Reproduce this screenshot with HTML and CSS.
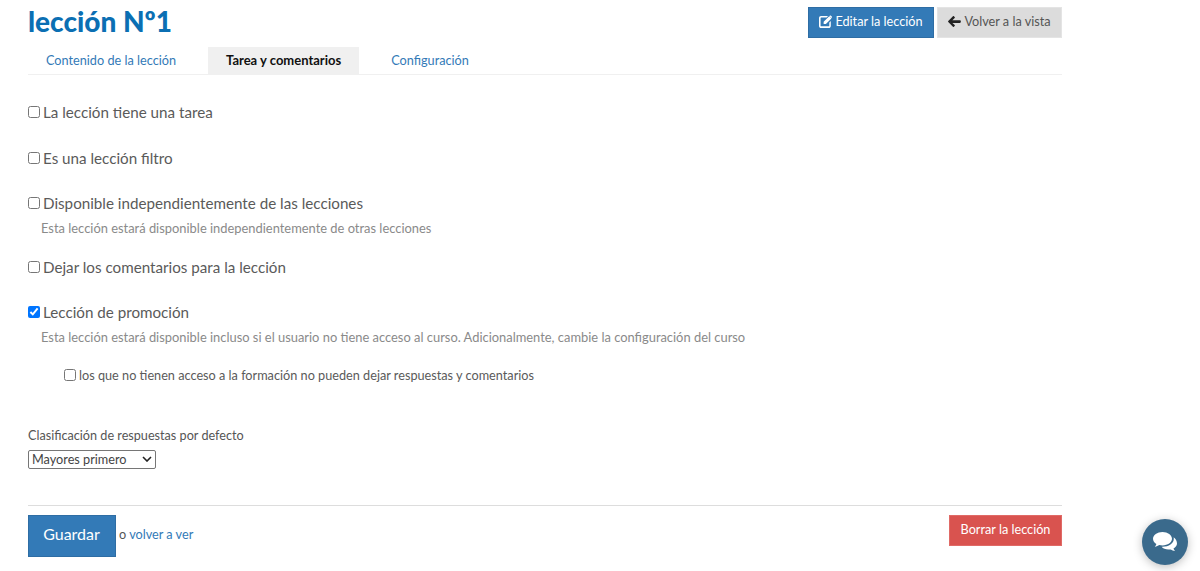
FILE: index.html
```html
<!DOCTYPE html>
<html lang="es">
<head>
<meta charset="utf-8">
<title>lección Nº1</title>
<link rel="stylesheet" href="styles.css">
</head>
<body>
<main class="page">
  <header class="head">
    <h1 class="title">lección Nº1</h1>
    <div class="head-actions">
      <a class="btn btn-blue" href="#"><svg class="ico" viewBox="0 0 14 14" width="13" height="13"><path fill="#fff" d="M2.2 1.2h7.6l-1.6 1.6H2.4c-.4 0-.7.3-.7.7v8c0 .4.3.7.7.7h8c.4 0 .7-.3.7-.7V8l1.6-1.6v5.4c0 1.2-1 2.2-2.2 2.2H2.200c-1.200 0-2.200-1-2.200-2.200V3.400c0-1.200 1-2.200 2.200-2.200z"/><path fill="#fff" d="M5 7.400 11 1.400l2.400 2.400-6 6H5zM11.700.7c.3-.3.800-.3 1.100 0l1 1c.3.3.3.800 0 1.100l-.5.500-2.100-2.100z"/></svg>Editar la lección</a>
      <a class="btn btn-grey" href="#"><svg class="ico" viewBox="0 0 14 12" width="13" height="11"><path fill="#222" d="M6.300.3 7.200 1.200c.3.300.3.700 0 1L4.700 4.500h8.300c.5 0 .9.400.9.900v1.200c0 .5-.4.900-.9.900H4.700l2.500 2.300c.3.300.3.700 0 1l-.9.900c-.3.300-.7.300-1 0L.2 6.500c-.3-.3-.3-.7 0-1L5.300.3c.3-.3.7-.3 1 0z"/></svg>Volver a la vista</a>
    </div>
  </header>
  <nav class="tabs">
    <a class="tab" href="#">Contenido de la lección</a>
    <a class="tab tab-active" href="#">Tarea y comentarios</a>
    <a class="tab" href="#">Configuración</a>
  </nav>
  <form class="form">
    <div class="field"><label class="check"><input type="checkbox">La lección tiene una tarea</label></div>
    <div class="field"><label class="check"><input type="checkbox">Es una lección filtro</label></div>
    <div class="field field-hint">
      <label class="check"><input type="checkbox">Disponible independientemente de las lecciones</label>
      <p class="hint">Esta lección estará disponible independientemente de otras lecciones</p>
    </div>
    <div class="field"><label class="check"><input type="checkbox">Dejar los comentarios para la lección</label></div>
    <div class="field field-tall">
      <label class="check"><input type="checkbox" checked>Lección de promoción</label>
      <p class="hint">Esta lección estará disponible incluso si el usuario no tiene acceso al curso. Adicionalmente, cambie la configuración del curso</p>
      <label class="check check-sub"><input type="checkbox">los que no tienen acceso a la formación no pueden dejar respuestas y comentarios</label>
    </div>
    <div class="sort">
      <label class="sort-label" for="sort">Clasificación de respuestas por defecto</label>
      <select id="sort" class="select"><option>Mayores primero</option></select>
    </div>
    <footer class="foot">
      <div class="foot-left">
        <button type="button" class="save">Guardar</button>
        <span class="alt">o <a href="#">volver a ver</a></span>
      </div>
      <a class="btn btn-red" href="#">Borrar la lección</a>
    </footer>
  </form>
</main>
<a class="chat" href="#" aria-label="Chat"><svg viewBox="0 0 24 20" width="24" height="20"><path fill="#fff" d="M9.500 0C4.300 0 0 3 0 6.800c0 2.100 1.300 4 3.400 5.300-.3 1-.9 1.900-1.600 2.600 1.700-.2 3.300-.8 4.500-1.700 1 .3 2.100.4 3.200.4 5.200 0 9.500-3 9.500-6.600S14.700 0 9.500 0z"/><path fill="#fff" d="M20.600 5.200c.1.500.2 1 .2 1.600 0 4.600-5 8-11.300 8h-.9c1.400 1.700 4 2.800 6.900 2.800.8 0 1.500-.1 2.200-.2 1.200.9 2.700 1.400 4.300 1.600-.7-.7-1.200-1.500-1.500-2.500 2.100-1.100 3.500-3 3.500-5 0-2.600-1.300-4.900-3.400-6.300z"/></svg></a>
</body>
</html>
```
FILE: styles.css
```css
* { box-sizing: border-box; }
html, body { margin: 0; padding: 0; }
body {
  height: 571px;
  overflow: hidden;
  background: #fff;
  color: #555;
  font-family: Lato, "Liberation Sans", sans-serif;
  font-size: 13px;
}
a { text-decoration: none; color: #337ab7; }
.page { width: 1034px; margin-left: 28px; }
.head {
  height: 47px;
  padding-top: 7px;
  display: flex;
  justify-content: space-between;
  align-items: flex-start;
}
.title {
  margin: 0;
  color: #0b6fb3;
  font-size: 28px;
  line-height: 28px;
  font-weight: 900;
}
.head-actions { display: flex; gap: 3px; }
.btn {
  display: inline-flex;
  align-items: center;
  justify-content: center;
  height: 31px;
  padding-bottom: 3px;
  font-size: 12.700px;
  border: 1px solid transparent;
}
.ico { margin-right: 3px; }
.btn-blue { width: 126px; background: #337ab7; border-color: #2e6da4; color: #fff; }
.btn-grey { width: 125px; background: #dcdcdc; border-color: #e4e4e4; color: #555; }
.btn-red { width: 113px; background: #d9534f; border-color: #e06a66; color: #fff; }
.tabs {
  display: flex;
  height: 28px;
  border-bottom: 1px solid #f0f0f0;
}
.tab {
  height: 28px;
  padding: 0 18px;
  font-size: 12.700px;
  line-height: 27px;
}
.tab-active {
  margin-left: 14px;
  margin-right: 14px;
  font-size: 13px;
  background: #f0f0f0;
  color: #111;
  font-weight: 700;
}
.form { padding-top: 26px; }
.field { height: 45.500px; }
.field-hint { height: 63.800px; }
.field-tall { height: 125.500px; }
.check {
  display: flex;
  align-items: center;
  font-size: 15.200px;
  line-height: 22px;
  color: #5a5a5a;
}
.check input {
  width: 12px;
  height: 12px;
  margin: 0 3px 0 0;
  accent-color: #0075ff;
}
.hint {
  margin: 5px 0 0 13px;
  font-size: 12.900px;
  line-height: 18px;
  color: #8a8a8a;
}
.check-sub {
  margin: 17.500px 0 0 36px;
  font-size: 12.700px;
}
.sort { display: flex; flex-direction: column; align-items: flex-start; }
.sort-label { font-size: 12.650px; line-height: 18px; margin-bottom: 5px; }
.select {
  appearance: none;
  width: 128px;
  height: 19px;
  padding: 0 0 1px 3px;
  font-family: inherit;
  font-size: 12.700px;
  color: #444;
  background: #fff url("data:image/svg+xml,%3Csvg xmlns='http://www.w3.org/2000/svg' width='10' height='6'%3E%3Cpath d='M1 1l4 4 4-4' fill='none' stroke='%23222' stroke-width='1.600'/%3E%3C/svg%3E") no-repeat right 3.500px center;
  border: 1px solid #767676;
  border-radius: 2px;
}
.foot {
  margin-top: 36px;
  padding-top: 9px;
  border-top: 1px solid #ddd;
  display: flex;
  justify-content: space-between;
  align-items: flex-start;
}
.foot-left { display: flex; align-items: center; }
.save {
  width: 88px;
  height: 42px;
  padding: 0 1px 4px 0;
  background: #337ab7;
  border: 1px solid #2e6da4;
  color: #fff;
  font-family: inherit;
  font-size: 16px;
}
.alt { margin: -4px 0 0 3px; font-size: 12.700px; color: #555; }
.chat {
  position: absolute;
  left: 1142px;
  top: 519px;
  width: 46px;
  height: 46px;
  border-radius: 50%;
  background: #3a6a8c;
  box-shadow: 0 2px 10px rgba(0,0,0,.25);
  display: flex;
  align-items: center;
  justify-content: center;
}
```
